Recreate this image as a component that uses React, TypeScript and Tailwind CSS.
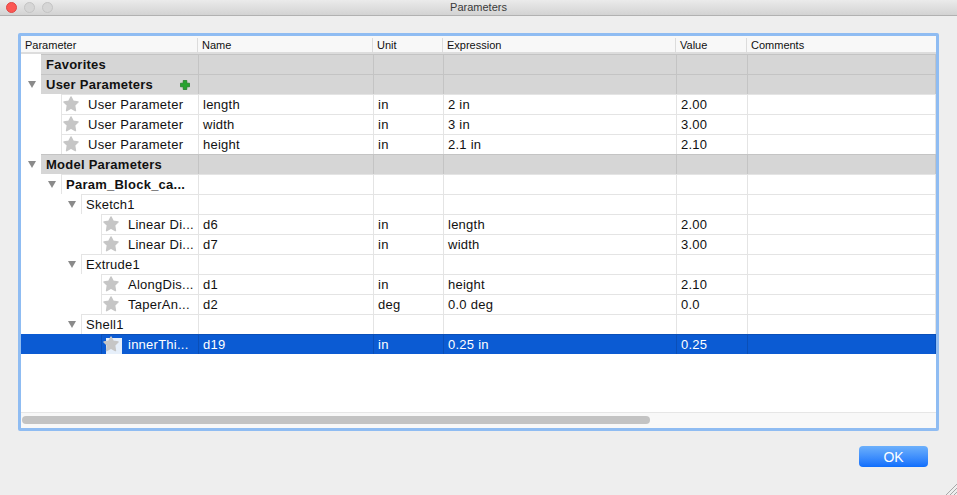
type Row = {
  depth: number;
  label: string;
  kind: "group" | "node" | "leaf";
  arrow?: boolean;
  plus?: boolean;
  selected?: boolean;
  name?: string;
  unit?: string;
  expression?: string;
  value?: string;
};

const headerColumns = "grid grid-cols-[177px_175px_70px_233px_71px_1fr]";
const bodyColumns = "grid grid-cols-[178px_175px_70px_233px_71px_1fr]";

const rows: Row[] = [
  { depth: 20, label: "Favorites", kind: "group" },
  { depth: 20, label: "User Parameters", kind: "group", arrow: true, plus: true },
  { depth: 40, label: "User Parameter", kind: "leaf", name: "length", unit: "in", expression: "2 in", value: "2.00" },
  { depth: 40, label: "User Parameter", kind: "leaf", name: "width", unit: "in", expression: "3 in", value: "3.00" },
  { depth: 40, label: "User Parameter", kind: "leaf", name: "height", unit: "in", expression: "2.1 in", value: "2.10" },
  { depth: 20, label: "Model Parameters", kind: "group", arrow: true },
  { depth: 40, label: "Param_Block_ca...", kind: "node", arrow: true },
  { depth: 60, label: "Sketch1", kind: "node", arrow: true },
  { depth: 80, label: "Linear Di...", kind: "leaf", name: "d6", unit: "in", expression: "length", value: "2.00" },
  { depth: 80, label: "Linear Di...", kind: "leaf", name: "d7", unit: "in", expression: "width", value: "3.00" },
  { depth: 60, label: "Extrude1", kind: "node", arrow: true },
  { depth: 80, label: "AlongDis...", kind: "leaf", name: "d1", unit: "in", expression: "height", value: "2.10" },
  { depth: 80, label: "TaperAn...", kind: "leaf", name: "d2", unit: "deg", expression: "0.0 deg", value: "0.0" },
  { depth: 60, label: "Shell1", kind: "node", arrow: true },
  { depth: 80, label: "innerThi...", kind: "leaf", name: "d19", unit: "in", expression: "0.25 in", value: "0.25", selected: true },
];

function Star() {
  return (
    <svg width="16" height="16" viewBox="0 0 16 16" className="shrink-0">
      <path
        d="M8 1 10.2 5.3 15 6 11.6 9.3 12.4 14.6 8 12.2 3.6 14.6 4.4 9.3 1 6 5.8 5.3Z"
        fill="#c6c6c6"
        stroke="#c6c6c6"
        strokeWidth="1.5"
        strokeLinejoin="round"
      />
    </svg>
  );
}

function Arrow({ group }: { group: boolean }) {
  return (
    <svg
      width="8"
      height="7"
      viewBox="0 0 8 7"
      className={`absolute top-[6px] ${group ? "-left-[13px]" : "-left-[14px]"}`}
    >
      <path d="M0 0H8L4 7Z" fill="#8a8a8a" />
    </svg>
  );
}

function Plus() {
  return (
    <svg width="10" height="10" viewBox="0 0 10 10" className="ml-auto mr-[8px] shrink-0">
      <path d="M3.2 0.5H6.8V3.2H9.5V6.8H6.8V9.5H3.2V6.8H0.5V3.2H3.2Z" fill="#27a32f" stroke="#17791f" strokeWidth="0.7" />
    </svg>
  );
}

function TableRow({ row }: { row: Row }) {
  const group = row.kind === "group";
  const cellColor = row.selected
    ? "border-[#0a4fb8]"
    : group
      ? "bg-[#d6d6d6] border-[#c4c4c4]"
      : "border-[#e4e4e4]";
  const cell = `h-[20px] border-t border-r pl-[4px] leading-[19px] truncate ${cellColor}`;

  return (
    <div className={`${bodyColumns} h-[20px] ${row.selected ? "bg-[#0b5bd3] text-white" : "text-[#111]"}`}>
      <div className="flex h-[20px]" style={{ paddingLeft: row.depth }}>
        <div
          className={`relative flex flex-1 items-center min-w-0 border-t border-r ${group ? "" : "border-l"} ${cellColor}`}
        >
          {row.arrow && <Arrow group={group} />}
          {row.kind === "leaf" && (
            <div className="relative ml-[1px] mr-[9px]">
              {row.selected && <div className="absolute left-[3px] top-[1px] w-[16px] h-[16px] bg-[#e6effa]" />}
              <div className="relative -top-[1px]">
                <Star />
              </div>
            </div>
          )}
          <span
            className={`whitespace-nowrap ${group ? "ml-[5px]" : row.kind === "node" ? "ml-[4px]" : ""} ${
              group || row.label.startsWith("Param_") ? "font-bold" : ""
            }`}
          >
            {row.label}
          </span>
          {row.plus && <Plus />}
        </div>
      </div>
      <div className={cell}>{row.name}</div>
      <div className={cell}>{row.unit}</div>
      <div className={cell}>{row.expression}</div>
      <div className={cell}>{row.value}</div>
      <div className={cell} />
    </div>
  );
}

function HeaderCell({ label, last }: { label: string; last?: boolean }) {
  return (
    <div className={`pl-[4px] leading-[15px] my-[1px] ${last ? "" : "border-r border-[#dcdcdc]"}`}>{label}</div>
  );
}

export default function App() {
  return (
    <div
      className="w-[957px] h-[495px] bg-[#eeeeee] flex flex-col overflow-hidden relative text-[13px] tracking-[0.25px] text-[#111]"
      style={{ fontFamily: '"Liberation Sans", Arial, sans-serif' }}
    >
      <div className="h-[16px] shrink-0 bg-gradient-to-b from-[#ebebeb] to-[#d3d3d3] border-b border-[#b1b1b1] relative flex items-center justify-center">
        <div className="absolute left-[6px] top-[2px] flex gap-[7px]">
          <span className="w-[11px] h-[11px] rounded-full bg-[#fc5753] border border-[#df4744]" />
          <span className="w-[11px] h-[11px] rounded-full bg-[#d6d6d6] border border-[#c4c4c4]" />
          <span className="w-[11px] h-[11px] rounded-full bg-[#d6d6d6] border border-[#c4c4c4]" />
        </div>
        <span className="text-[11px] tracking-normal text-[#3a3a3a] leading-none">Parameters</span>
      </div>

      <div className="ml-[18px] mt-[17px] w-[921px] h-[398px] rounded-[2px] bg-[#8fbcf2] p-[3px]">
        <div className="h-full bg-white flex flex-col">
          <div className={`${headerColumns} h-[18px] shrink-0 pt-[1px] bg-[#f8f8f8] border-b-2 border-[#dddddd] text-[11px] tracking-normal`}>
            <HeaderCell label="Parameter" />
            <HeaderCell label="Name" />
            <HeaderCell label="Unit" />
            <HeaderCell label="Expression" />
            <HeaderCell label="Value" />
            <HeaderCell label="Comments" last />
          </div>
          <div className="flex-1 min-h-0">
            {rows.map((row, i) => (
              <TableRow key={i} row={row} />
            ))}
          </div>
          <div className="h-[16px] shrink-0 bg-[#f8f8f8] border-t border-[#e6e6e6] px-[1px] pt-[3px]">
            <div className="h-[8px] w-[628px] rounded-full bg-[#c3c3c3]" />
          </div>
        </div>
      </div>

      <div className="flex justify-end mt-[15px] pr-[29px]">
        <button
          type="button"
          className="w-[69px] h-[21px] rounded-[4px] bg-gradient-to-b from-[#6cb0fb] to-[#0d6efc] text-white text-[14px] tracking-normal leading-[20px]"
        >
          OK
        </button>
      </div>

      <svg width="12" height="12" viewBox="0 0 12 12" className="absolute right-0 bottom-0">
        <path d="M1 12 12 1M5 12 12 5M9 12 12 9" stroke="#a8a8a8" strokeWidth="1" />
      </svg>
    </div>
  );
}
